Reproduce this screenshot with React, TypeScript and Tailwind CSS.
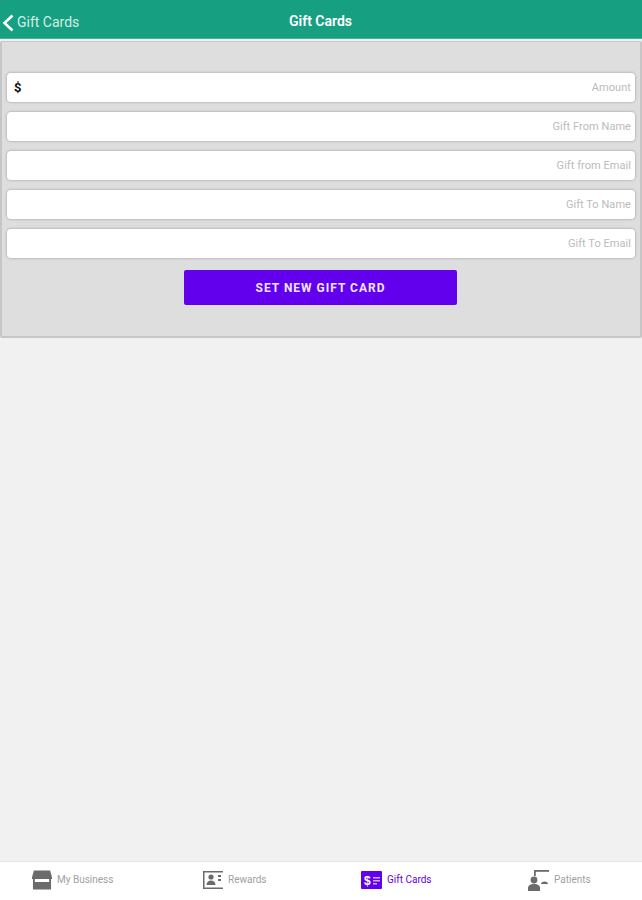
import React from 'react';

const fields = ['Amount', 'Gift From Name', 'Gift from Email', 'Gift To Name', 'Gift To Email'];

const StoreIcon = () => (
  <svg width="20" height="20" viewBox="0 0 21 20" fill="#6b6b6b">
    <path d="M2 0h17l2 7v2H0V7z" />
    <path d="M1 9h2v3h15V9h2v11H1z" />
  </svg>
);

const RewardsIcon = () => (
  <svg width="20" height="18" viewBox="0 0 20 18" fill="#6b6b6b">
    <path d="M0 0h20v1.500H1.500v15H20V18H0z" />
    <circle cx="8" cy="6" r="2.600" />
    <path d="M3.500 14c0-3 2-4.500 4.500-4.500s4.500 1.500 4.500 4.500z" />
    <rect x="15" y="4" width="3" height="2" />
    <rect x="15" y="8" width="3" height="2" />
  </svg>
);

const GiftIcon = () => (
  <svg width="21" height="18" viewBox="0 0 21 18">
    <rect width="21" height="18" rx="1" fill="#6200ee" />
    <rect x="12" y="6" width="7" height="1.500" fill="#c9b0f5" />
    <rect x="12" y="9" width="7" height="1.500" fill="#c9b0f5" />
    <rect x="12" y="12" width="4" height="1.500" fill="#c9b0f5" />
    <text x="3" y="14" fontSize="12" fontWeight="700" fill="#fff" fontFamily="'Liberation Sans', sans-serif">$</text>
  </svg>
);

const PatientsIcon = () => (
  <svg width="21" height="21" viewBox="0 0 21 21" fill="#6b6b6b">
    <rect x="6" y="0" width="15" height="1.800" />
    <rect x="6" y="0" width="1.800" height="6" />
    <circle cx="6" cy="10" r="3.400" />
    <path d="M0 21v-3c0-2.500 2.500-4 6-4s6 1.500 6 4v3z" />
    <path d="M13 14c0-1.600 1.500-2.500 3.500-2.500S20 12.400 20 14z" />
  </svg>
);

const tabs = [
  { label: 'My Business', icon: <StoreIcon />, x: 'ml-[32px] w-[149px]', color: 'text-[#a0a0a0]' },
  { label: 'Rewards', icon: <RewardsIcon />, x: 'ml-[22px] w-[139px]', color: 'text-[#a0a0a0]' },
  { label: 'Gift Cards', icon: <GiftIcon />, x: 'ml-[19px] w-[147px]', color: 'text-[#6200ee]' },
  { label: 'Patients', icon: <PatientsIcon />, x: 'ml-[20px] w-[100px]', color: 'text-[#a0a0a0]' },
];

export default function App() {
  return (
    <div className="flex h-[900px] w-[642px] flex-col overflow-hidden bg-[#f1f1f1] font-['Roboto','Liberation_Sans',sans-serif]">
      <header className="relative flex h-[39px] shrink-0 items-center justify-center border-b border-[#3fb39b] bg-[#179f81] pt-[4px]">
        <div className="absolute left-[2px] top-[12px] flex items-center gap-[3px]">
          <svg width="12" height="18" viewBox="0 0 12 18" fill="none">
            <path d="M10.500 1.500L2.500 9l8 7.500" stroke="#fff" strokeWidth="2.600" />
          </svg>
          <span className="text-[14px] text-[#d3eee7]">Gift Cards</span>
        </div>
        <span className="-ml-[1px] text-[14px] font-semibold text-white">Gift Cards</span>
      </header>

      <section className="mt-[2px] flex h-[297px] shrink-0 flex-col rounded-[2px] border border-[#c6c6c6] border-b-2 border-l-2 border-r-2 bg-[#dedede] pl-[5px] pr-[5px] pt-[31px]">
        <div className="flex flex-col gap-[10px]">
          {fields.map((field, i) => (
            <div
              key={field}
              className="flex h-[29px] items-center justify-between rounded-[4px] bg-white pl-[7px] pr-[4px] pt-[1px] shadow-[0_0_2px_1px_#bdbdbd]"
            >
              <span className="text-[13px] font-bold text-[#111]">{i === 0 ? '$' : ''}</span>
              <span className="text-[11px] tracking-[0.05px] text-[#bbbbbb]">{field}</span>
            </div>
          ))}
        </div>
        <button className="ml-[177px] mt-[12px] flex h-[35px] w-[273px] items-center justify-center rounded-[2px] bg-[#6200ee] text-[12px] font-bold tracking-[1px] text-[#eee5fd]">
          SET NEW GIFT CARD
        </button>
      </section>

      <div className="flex-1" />

      <nav className="flex h-[39px] shrink-0 items-center border-t border-[#e6e6e6] bg-white pb-[2px]">
        {tabs.map((tab) => (
          <div key={tab.label} className={`flex items-center gap-[5px] ${tab.x}`}>
            {tab.icon}
            <span className={`pb-[2px] text-[10px] ${tab.color}`}>{tab.label}</span>
          </div>
        ))}
      </nav>
    </div>
  );
}
